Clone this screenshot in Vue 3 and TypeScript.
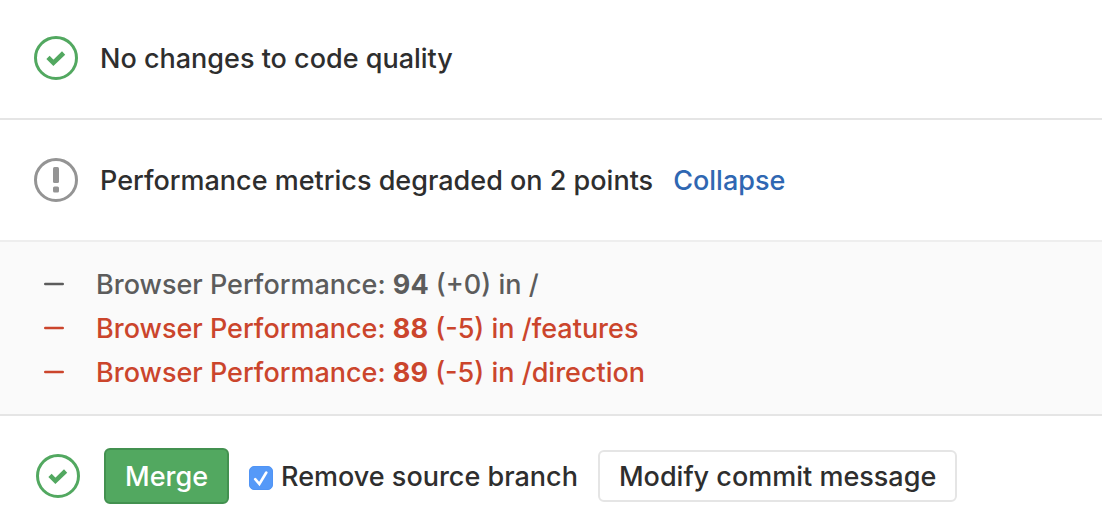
<script setup lang="ts">
import { ref } from 'vue'

interface Metric {
  score: number
  delta: string
  path: string
  degraded: boolean
}

const metrics: Metric[] = [
  { score: 94, delta: '+0', path: '/', degraded: false },
  { score: 88, delta: '-5', path: '/features', degraded: true },
  { score: 89, delta: '-5', path: '/direction', degraded: true },
]

const expanded = ref(true)
const removeBranch = ref(true)
</script>

<template>
  <main class="widget">
    <section class="row">
      <svg class="icon success" viewBox="0 0 44 44" aria-hidden="true">
        <circle cx="22" cy="22" r="20.5" />
        <path d="M14 21.4L19.4 26.8L29.6 17" />
      </svg>
      <p class="text">No changes to code quality</p>
    </section>

    <section class="row">
      <svg class="icon warning" viewBox="0 0 44 44" aria-hidden="true">
        <circle cx="22" cy="22" r="20.5" />
        <rect x="19" y="9" width="6" height="16" rx="1.5" />
        <rect x="19" y="28.5" width="6" height="6" rx="1.5" />
      </svg>
      <p class="text">Performance metrics degraded on 2 points</p>
      <button class="toggle" type="button" @click="expanded = !expanded">
        {{ expanded ? 'Collapse' : 'Expand' }}
      </button>
    </section>

    <ul v-if="expanded" class="metrics">
      <li v-for="m in metrics" :key="m.path" class="metric" :class="{ degraded: m.degraded }">
        <svg class="dash" viewBox="0 0 20 4" aria-hidden="true">
          <rect y="0.8" width="20" height="2.4" rx="1.2" />
        </svg>
        <span>Browser Performance: <strong>{{ m.score }}</strong> ({{ m.delta }}) in {{ m.path }}</span>
      </li>
    </ul>

    <section class="actions">
      <svg class="icon success" viewBox="0 0 44 44" aria-hidden="true">
        <circle cx="22" cy="22" r="20.5" />
        <path d="M14 21.4L19.4 26.8L29.6 17" />
      </svg>
      <button class="merge" type="button">Merge</button>
      <label class="option" for="remove-branch">
        <input id="remove-branch" v-model="removeBranch" class="check" type="checkbox" />
        <svg class="tick" viewBox="0 0 24 24" aria-hidden="true">
          <path d="M6.2 13.2L10.4 18L17.3 6.5" />
        </svg>
        <span>Remove source branch</span>
      </label>
      <button class="modify" type="button">Modify commit message</button>
    </section>
  </main>
</template>

<style>
body {
  background: #fff;
}
</style>

<style scoped>
.widget {
  font: 500 27px/44px Inter, "Liberation Sans", sans-serif;
  color: #2e2e2e;
}
.row {
  display: flex;
  align-items: center;
  box-sizing: border-box;
  min-height: 120px;
  padding: 0 34px 2px;
  border-bottom: 2px solid #e5e5e5;
}
.row:has(+ .metrics) {
  min-height: 122px;
  padding-bottom: 0;
  border-color: #eee;
}
.icon {
  flex: none;
  width: 44px;
  height: 44px;
  fill: none;
  stroke-width: 3;
}
.success {
  stroke: #52a860;
}
.success path {
  stroke-width: 4.6;
}
.warning {
  stroke: #949494;
}
.warning rect {
  fill: #949494;
  stroke: none;
}
.text {
  margin: 0 0 0 22px;
  padding-top: 2px;
}
button {
  font: inherit;
  cursor: pointer;
  white-space: nowrap;
}
.toggle {
  margin: 0 0 0 20px;
  padding: 2px 0 0;
  border: 0;
  background: none;
  color: #2f67b2;
}
.metrics {
  margin: 0;
  padding: 21px 44px 19px;
  list-style: none;
  background: #fafafa;
  border-bottom: 2px solid #e5e5e5;
  color: #5c5c5c;
}
.metric {
  display: flex;
  align-items: center;
}
.degraded {
  color: #cb452c;
}
.dash {
  width: 20px;
  height: 4px;
  margin: 0 32px 2px 0;
  fill: currentColor;
}
strong {
  font-weight: 700;
}
.actions {
  display: flex;
  align-items: center;
  padding: 32px 36px 26px;
}
.merge {
  box-sizing: border-box;
  height: 56px;
  margin-left: 24px;
  padding: 2px 19px 0;
  line-height: 50px;
  border: 2px solid #439150;
  border-radius: 6px;
  background: #52a860;
  color: #fff;
}
.option {
  display: grid;
  grid-template-columns: 24px auto;
  align-items: center;
  column-gap: 8px;
  margin-left: 20px;
  padding-top: 2px;
  white-space: nowrap;
}
.check,
.tick {
  grid-area: 1 / 1;
  width: 24px;
  height: 24px;
  margin: 2px 0 0;
}
.check {
  appearance: none;
  border: 1px solid #5094f5;
  border-radius: 5px;
  background: #fff;
}
.check:checked {
  background: #5599f8;
}
.tick {
  z-index: 1;
  pointer-events: none;
  fill: none;
  stroke: #fff;
  stroke-width: 2.6;
  stroke-linecap: round;
}
.modify {
  box-sizing: border-box;
  height: 52px;
  margin-left: 20px;
  padding: 2px 19px 0;
  border: 2px solid #e5e5e5;
  border-radius: 6px;
  background: #fff;
  color: #2e2e2e;
}
</style>
